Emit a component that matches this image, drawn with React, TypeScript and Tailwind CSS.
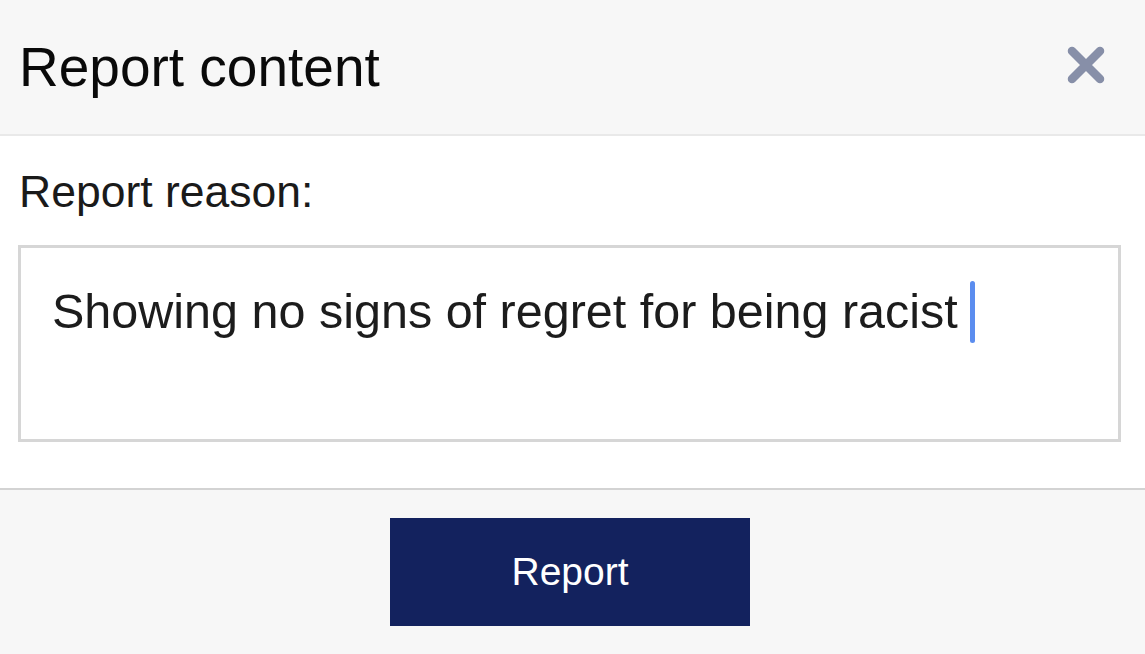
import React from "react";

const font = { fontFamily: '"Liberation Sans", Arial, sans-serif' };

const CloseIcon: React.FC = () => (
  <svg width="40" height="40" viewBox="0 0 40 40" fill="none">
    <path
      d="M6 6 L34 34 M34 6 L6 34"
      stroke="#878fa8"
      strokeWidth="8.5"
      strokeLinecap="round"
    />
  </svg>
);

const App: React.FC = () => {
  const reason = "Showing no signs of regret for being racist";

  return (
    <div className="w-[1145px] h-[654px] bg-white flex flex-col" style={font}>
      {/* header */}
      <div className="h-[136px] shrink-0 bg-[#f7f7f7] border-b-2 border-[#e9e9e9] flex items-center justify-between pl-[19px] pr-[39px]">
        <h1 className="text-[55px] leading-none text-[#0a0a0a]">
          Report content
        </h1>
        <button className="mt-[-4px]">
          <CloseIcon />
        </button>
      </div>

      {/* body */}
      <div className="bg-white px-[18px] pt-[34px] pb-[46px] border-b-2 border-[#d3d3d3]">
        <label className="block text-[44.5px] leading-none text-[#1a1a1a] pl-[1px]">
          Report reason:
        </label>
        <div className="mt-[30px] h-[197px] w-[1103px] border-[3px] border-[#d6d6d6] bg-white pl-[31px] pt-[40px]">
          <div className="flex items-center h-[48px]">
            <span className="text-[48.5px] leading-none text-[#1c1c1c] whitespace-pre">
              {reason}
            </span>
            <span className="ml-[12px] w-[5px] h-[62px] rounded-full bg-[#5b8def] inline-block" />
          </div>
        </div>
      </div>

      {/* footer */}
      <div className="flex-1 bg-[#f7f7f7] flex justify-center items-start pt-[28px] pr-[5px]">
        <button className="w-[360px] h-[108px] bg-[#13225e] text-white text-[39px] leading-none flex items-center justify-center">
          Report
        </button>
      </div>
    </div>
  );
};

export default App;
